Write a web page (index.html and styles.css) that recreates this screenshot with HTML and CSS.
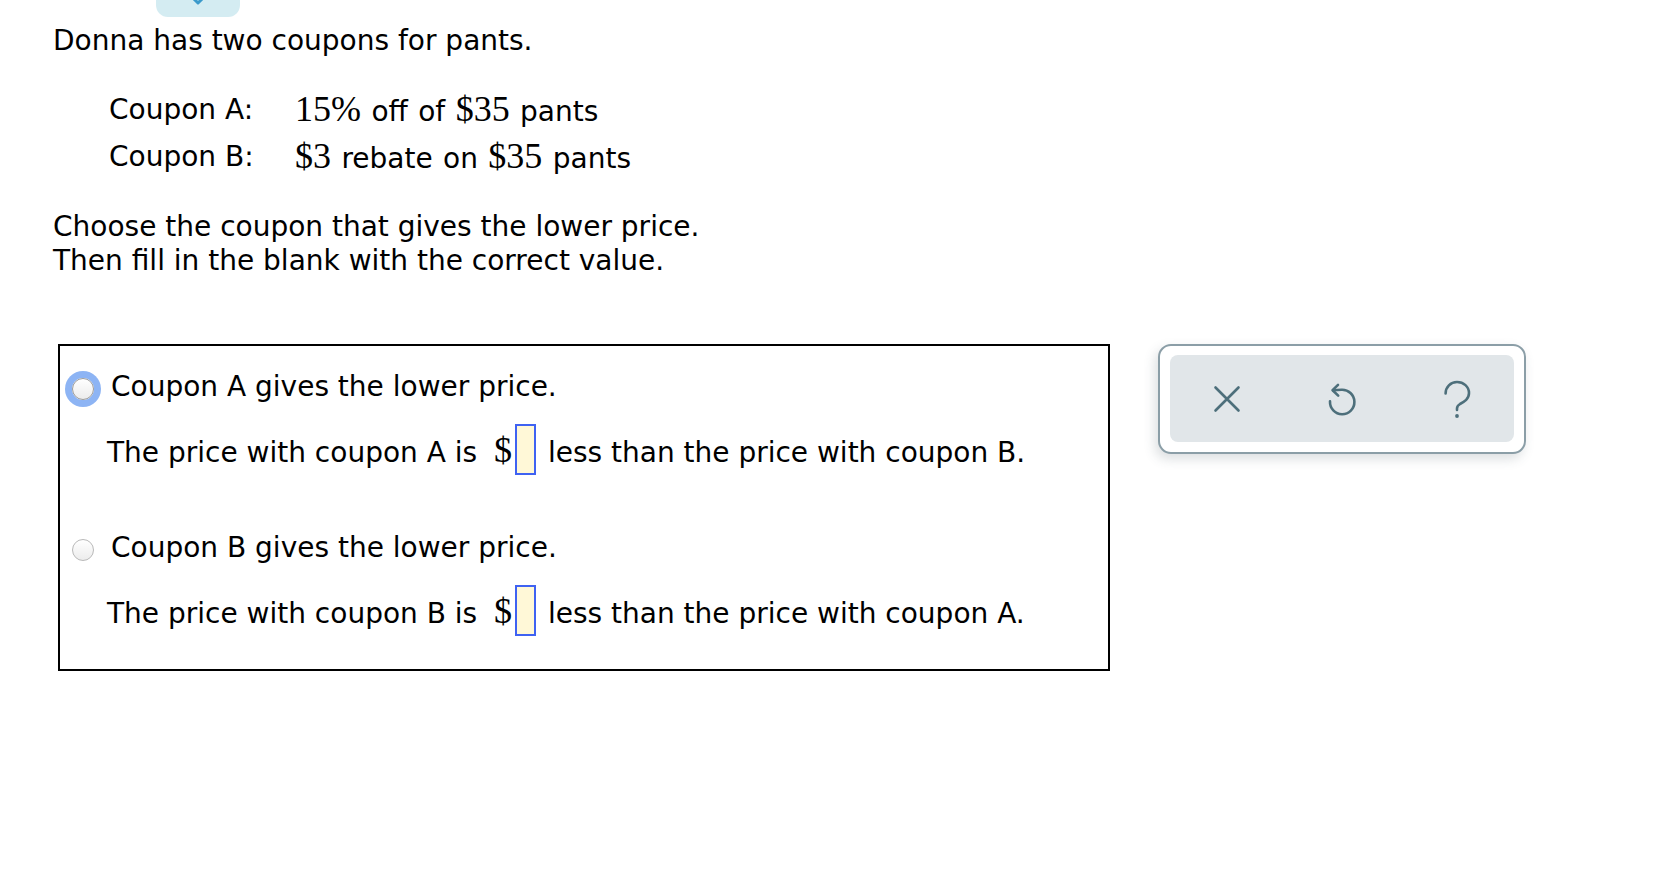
FILE: index.html
```html
<!DOCTYPE html>
<html lang="en">
<head>
<meta charset="utf-8">
<title>Coupons</title>
<link rel="stylesheet" href="styles.css">
</head>
<body>
<div class="tab">
  <svg class="tab-icon" width="20" height="14" viewBox="0 0 20 14"><path d="M4 2 L10 8 L16 2" fill="none" stroke="#3b9acb" stroke-width="3" stroke-linecap="round" stroke-linejoin="round"/></svg>
</div>
<main class="question">
  <p class="intro">Donna has two coupons for pants.</p>
  <div class="coupons">
    <div class="crow"><span class="clabel">Coupon A:</span><span class="cval"><span class="m">15%</span> off of <span class="m">$35</span> pants</span></div>
    <div class="crow"><span class="clabel">Coupon B:</span><span class="cval"><span class="m">$3</span> rebate on <span class="m">$35</span> pants</span></div>
  </div>
  <p class="instr">Choose the coupon that gives the lower price.<br>Then fill in the blank with the correct value.</p>
  <div class="work">
    <div class="answers">
      <div class="opt">
        <div class="orow"><span class="radio focus"></span><span class="olabel">Coupon A gives the lower price.</span></div>
        <div class="prow">The price with coupon A is <span class="m dollar">$</span><span class="blank"></span> less than the price with coupon B.</div>
      </div>
      <div class="opt opt-b">
        <div class="orow"><span class="radio"></span><span class="olabel">Coupon B gives the lower price.</span></div>
        <div class="prow">The price with coupon B is <span class="m dollar">$</span><span class="blank"></span> less than the price with coupon A.</div>
      </div>
    </div>
    <div class="tools">
      <div class="tools-panel">
        <button class="tool" aria-label="Clear">
          <svg width="36" height="40" viewBox="0 0 36 40"><path d="M6.5 8.5 L29.5 31.5 M29.5 8.5 L6.5 31.5" fill="none" stroke="#4d6f7b" stroke-width="2.6" stroke-linecap="round"/></svg>
        </button>
        <button class="tool" aria-label="Undo">
          <svg width="36" height="40" viewBox="0 0 36 40"><path d="M14 5.8 L8.6 11.2 L14.2 16.6" fill="none" stroke="#4d6f7b" stroke-width="2.6" stroke-linecap="round" stroke-linejoin="round"/><path d="M9 11.2 L17.5 10.8 A12.2 12.2 0 1 1 6 22.4" fill="none" stroke="#4d6f7b" stroke-width="2.6" stroke-linecap="round"/></svg>
        </button>
        <button class="tool" aria-label="Help">
          <svg width="36" height="40" viewBox="0 0 36 40"><path d="M6.6 14.5 C6.6 8 11.6 3 18 3 C24.6 3 30 7.6 30 14 C30 20 25.4 22.6 21 25 C19 26.2 18 27.4 18 29.6 L18 31" fill="none" stroke="#4d6f7b" stroke-width="2.6" stroke-linecap="round"/><circle cx="18" cy="37" r="1.9" fill="#4d6f7b"/></svg>
        </button>
      </div>
    </div>
  </div>
</main>
</body>
</html>
```
FILE: styles.css
```css
html, body {
  margin: 0;
  padding: 0;
  background: #ffffff;
}

body {
  font-family: "DejaVu Sans", Verdana, sans-serif;
  font-size: 28px;
  color: #000000;
}

.tab {
  margin-left: 156px;
  width: 84px;
  height: 17px;
  background: #d4ecf2;
  border-radius: 0 0 12px 12px;
  overflow: hidden;
  display: flex;
  justify-content: center;
}

.tab-icon {
  margin-top: -5px;
}

.question {
  padding-left: 53px;
}

.intro {
  margin: 8px 0 0;
  line-height: 32px;
}

.coupons {
  margin-top: 29px;
  padding-left: 56px;
}

.crow {
  display: flex;
  height: 47px;
  line-height: 47px;
  white-space: nowrap;
}

.clabel {
  width: 186px;
  flex: none;
}

.cval {
  word-spacing: 1.5px;
}

.m {
  font-family: "Liberation Serif", "Times New Roman", serif;
  font-size: 36px;
}

.instr {
  margin: 30px 0 0;
  line-height: 34px;
}

.work {
  margin-top: 66px;
  margin-left: 5px;
  display: flex;
  align-items: flex-start;
}

.answers {
  box-sizing: border-box;
  width: 1052px;
  border: 2px solid #000000;
  padding: 25px 0 33px;
}

.opt-b {
  margin-top: 57px;
}

.orow {
  display: flex;
  height: 32px;
  line-height: 32px;
}

.radio {
  flex: none;
  box-sizing: border-box;
  width: 22px;
  height: 22px;
  margin: 7px 0 0 12px;
  border-radius: 50%;
  border: 1px solid #b9b9b9;
  background: linear-gradient(#ffffff, #ececec);
}

.radio.focus {
  box-shadow: 0 0 0 7px #8db4f4;
  border-color: #9a9a9a;
}

.olabel {
  margin-left: 17px;
}

.prow {
  margin-top: 21px;
  padding-left: 47px;
  line-height: 32px;
  white-space: nowrap;
}

.dollar {
  margin-left: 8px;
}

.blank {
  display: inline-block;
  box-sizing: border-box;
  width: 21px;
  height: 51px;
  margin: 0 3px 0 3px;
  vertical-align: -13px;
  border: 2px solid #3f62f2;
  background: #fff8d7;
}

.tools {
  box-sizing: border-box;
  width: 368px;
  height: 110px;
  margin-left: 48px;
  padding: 9px 10px 10px;
  border: 2px solid #8b9ea7;
  border-radius: 13px;
  background: #ffffff;
  box-shadow: -3px 5px 12px rgba(60, 80, 90, 0.18);
}

.tools-panel {
  height: 100%;
  display: grid;
  grid-template-columns: repeat(3, 1fr);
  align-items: center;
  justify-items: center;
  background: #e1e6e9;
  border-radius: 8px;
}

.tool {
  border: 0;
  padding: 0;
  margin: 0;
  background: transparent;
  display: flex;
}
```
